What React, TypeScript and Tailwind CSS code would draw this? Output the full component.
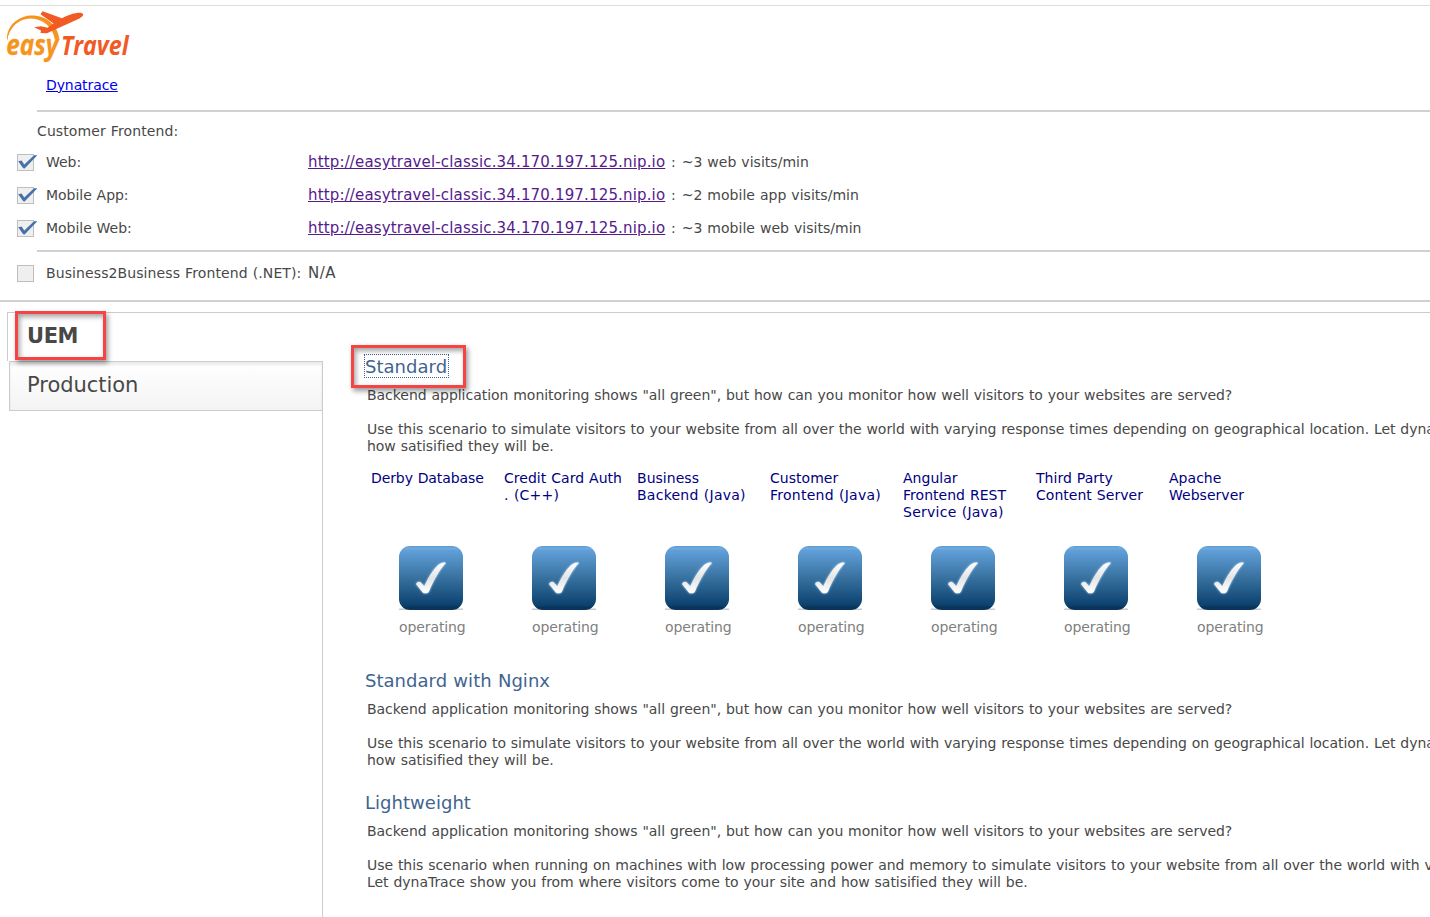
import type { ReactNode } from "react";

const SITE = "http://easytravel-classic.34.170.197.125.nip.io";

const frontends = [
  { name: "Web:", rate: "~3 web visits/min" },
  { name: "Mobile App:", rate: "~2 mobile app visits/min" },
  { name: "Mobile Web:", rate: "~3 mobile web visits/min" },
];

const services = [
  ["Derby Database"],
  ["Credit Card Auth", ". (C++)"],
  ["Business", "Backend (Java)"],
  ["Customer", "Frontend (Java)"],
  ["Angular", "Frontend REST", "Service (Java)"],
  ["Third Party", "Content Server"],
  ["Apache", "Webserver"],
];

const INTRO =
  'Backend application monitoring shows "all green", but how can you monitor how well visitors to your websites are served?';
const WORLD = [
  "Use this scenario to simulate visitors to your website from all over the world with varying response times depending on geographical location. Let dynaTrace",
  "how satisified they will be.",
];
const LIGHT = [
  "Use this scenario when running on machines with low processing power and memory to simulate visitors to your website from all over the world with varying",
  "Let dynaTrace show you from where visitors come to your site and how satisified they will be.",
];

function Logo() {
  return (
    <svg className="ml-1.5 block overflow-visible" width="134" height="56" viewBox="6 6 134 56">
      <path d="M7.2 41C5.600 28 16 17 30 15.600C44 14.800 57 23 59.300 38.500L54.800 39.500C53 27 43 19 31 18.600C19 18.400 9.200 27 7.200 41Z" fill="#f7941e" />
      <path
        d="M34 27.300L41 26.200L47.500 27.800L53.500 23.600L40.500 14.300L42.500 11.200L62 18.300C69 14.500 77 12.300 81.500 13C84.300 14 83.500 16 79.500 18.400L59 27.800L47 33.300L40.500 33L41 30.600Z"
        fill="#f15a24"
      />
      <g fontFamily="Open Sans, sans-serif" fontStyle="italic" fontWeight="700">
        <text x="6.300" y="54.800" fontSize="28" textLength="52" lengthAdjust="spacingAndGlyphs" fill="#f7941e" stroke="#f7941e" strokeWidth="0.300">easy</text>
        <text x="61" y="54.800" fontSize="27.500" textLength="67.500" lengthAdjust="spacingAndGlyphs" fill="#f15a24">Travel</text>
      </g>
    </svg>
  );
}

function Box({ checked }: { checked?: boolean }) {
  return (
    <svg className="ml-[17px] mr-2 block shrink-0" width="21" height="18" viewBox="0 0 21 18">
      <rect x="0.5" y="0.5" width="16" height="16" fill="#efefef" stroke="#bebebe" />
      {checked && <path d="M1.200 7.200L4.600 6.600L7.300 10.600L17 1.200L20.400 1.200L7.600 14.400L6.200 14.200Z" fill="#4572a7" />}
    </svg>
  );
}

function Rule({ inset }: { inset?: boolean }) {
  return <div className={inset ? "ml-[37px] h-0.5 bg-[#d0d0d0]" : "h-0.5 bg-[#d0d0d0]"} />;
}

function StatusIcon() {
  const mark =
    "M17 38C18.200 35.800 20.700 35.200 21.900 36.600L25.300 40.300C29 31.500 36 20 41.500 17.400C43.500 16.400 46.200 16.400 46.900 17C41 23 34.600 34.500 30 45.500C29 47.700 25 48 23.600 46.200Z";
  return (
    <svg className="block" width="64" height="64" viewBox="0 0 64 64">
      <defs>
        <linearGradient id="tile" x1="0" y1="0" x2="0" y2="1">
          <stop offset="0" stopColor="#5a9bd6" />
          <stop offset="0.04" stopColor="#72aadd" />
          <stop offset="0.07" stopColor="#609fd8" />
          <stop offset="0.5" stopColor="#37719f" />
          <stop offset="0.92" stopColor="#0d426f" />
          <stop offset="0.96" stopColor="#08345a" />
          <stop offset="1" stopColor="#0a365d" />
        </linearGradient>
        <linearGradient id="mark" x1="0" y1="0" x2="0" y2="1">
          <stop offset="0" stopColor="#ffffff" />
          <stop offset="0.5" stopColor="#e4e4e4" />
          <stop offset="1" stopColor="#ffffff" />
        </linearGradient>
        <linearGradient id="base" x1="0" y1="0" x2="0" y2="1">
          <stop offset="0" stopColor="#ffffff" />
          <stop offset="1" stopColor="#bdbdbd" />
        </linearGradient>
        <filter id="glow" x="-30%" y="-30%" width="160%" height="160%">
          <feGaussianBlur stdDeviation="1.300" />
        </filter>
      </defs>
      <rect x="0" y="61.500" width="64" height="2.500" fill="url(#base)" />
      <rect width="64" height="64" rx="11" fill="url(#tile)" />
      <path d={mark} fill="#b9dcff" filter="url(#glow)" />
      <path d={mark} fill="url(#mark)" />
    </svg>
  );
}

function Callout({ className }: { className: string }) {
  return (
    <div
      className={`pointer-events-none absolute border-3 border-[#f64343] shadow-[2px_3px_5px_rgba(0,0,0,0.4),inset_2px_3px_5px_rgba(0,0,0,0.35)] ${className}`}
    />
  );
}

function Scenario({ title, focused, body, children }: { title: string; focused?: boolean; body: string[]; children?: ReactNode }) {
  return (
    <section>
      <h2 className="relative flex h-7 text-[18px] leading-6 tracking-[0.03px] text-[#3f648f]">
        <span className={focused ? "-ml-px h-6 w-[85px] border border-dotted border-[#3f648f] leading-6" : "h-6 leading-[26px]"}>{title}</span>
        {focused && <Callout className="-left-3.5 -top-[9px] h-[43px] w-[115px]" />}
      </h2>
      <div className="ml-0.5 mt-[5px] leading-[17px]">
        <p>{INTRO}</p>
        <p className="mt-[17px] tracking-[-0.045px]">{body[0]}</p>
        <p>{body[1]}</p>
      </div>
      {children}
    </section>
  );
}

export default function App() {
  return (
    <div className="h-[917px] w-full overflow-hidden whitespace-nowrap bg-white pt-[5px] font-['DejaVu_Sans',sans-serif] text-[14px] leading-[17px] tracking-[-0.035px] text-[#484848] [word-spacing:0.48px]">
      <header className="border-t border-[#dddddd]">
        <Logo />
        <div className="flex h-12 items-center pb-0.5 pl-[46px]">
          <a className="tracking-[-0.1px] text-[#0000ee] underline" href="#dynatrace">Dynatrace</a>
        </div>
        <Rule inset />
        <div className="flex h-[34px] items-center pl-[37px] pt-1 tracking-[0.1px]">Customer Frontend:</div>
        {frontends.map((f) => (
          <div key={f.name} className="flex h-[33px] items-center">
            <Box checked />
            <span className="w-[262px]">{f.name}</span>
            <a className="w-[358px] text-[15px] tracking-[0.16px] text-[#551a8b] underline" href={SITE}>{SITE}</a>
            <span className="ml-[5px] flex gap-1.5">
              <span>:</span>
              <span className="tracking-[0.03px]">{f.rate}</span>
            </span>
          </div>
        ))}
        <div className="h-[5px]" />
        <Rule inset />
        <div className="flex h-12 items-center pb-1">
          <Box />
          <span className="w-[262px] pb-0.5 tracking-[0.1px]">Business2Business Frontend (.NET):</span>
          <span className="pb-0.5 text-[15px] tracking-[0.5px]">N/A</span>
        </div>
        <Rule />
      </header>
      <main className="ml-[7px] mt-2.5 flex h-[605px] border-t border-[#cccccc]">
        <nav className="flex w-[316px] shrink-0 flex-col text-[21px] leading-6">
          <div className="relative flex h-12 items-center border-l border-[#cccccc] pb-[3px] pl-[19px]">
            <b className="tracking-[-0.4px]">UEM</b>
            <Callout className="-top-0.5 left-[7px] h-[49px] w-[91px]" />
          </div>
          <div className="ml-0.5 flex h-[50px] items-center border border-[#cccccc] bg-linear-to-b from-white to-[#f4f4f4] pb-[3px] pl-[17px] shadow-[inset_0_3px_3px_rgba(0,0,0,0.08)]">Production</div>
          <div className="grow border-r border-[#cccccc]" />
        </nav>
        <div className="ml-[42px] min-w-0 grow overflow-visible pt-[41px]">
          <Scenario title="Standard" focused body={WORLD}>
            <div className="ml-1.5 mt-[15px] flex">
              {services.map((lines) => (
                <div key={lines[0]} className="w-[133px] shrink-0 text-[#000080]">
                  <div className="h-[76px]">
                    {lines.map((l) => (
                      <div key={l} className={l.includes("(") ? "tracking-[0.25px]" : l.startsWith("Derby") ? "tracking-[-0.1px]" : "tracking-[0.03px]"}>{l}</div>
                    ))}
                  </div>
                  <div className="ml-7">
                    <StatusIcon />
                    <div className="mt-[9px] tracking-[-0.1px] text-[#808080]">operating</div>
                  </div>
                </div>
              ))}
            </div>
            <div className="h-8" />
          </Scenario>
          <Scenario title="Standard with Nginx" body={WORLD}>
            <div className="h-[21px]" />
          </Scenario>
          <Scenario title="Lightweight" body={LIGHT} />
        </div>
      </main>
    </div>
  );
}
